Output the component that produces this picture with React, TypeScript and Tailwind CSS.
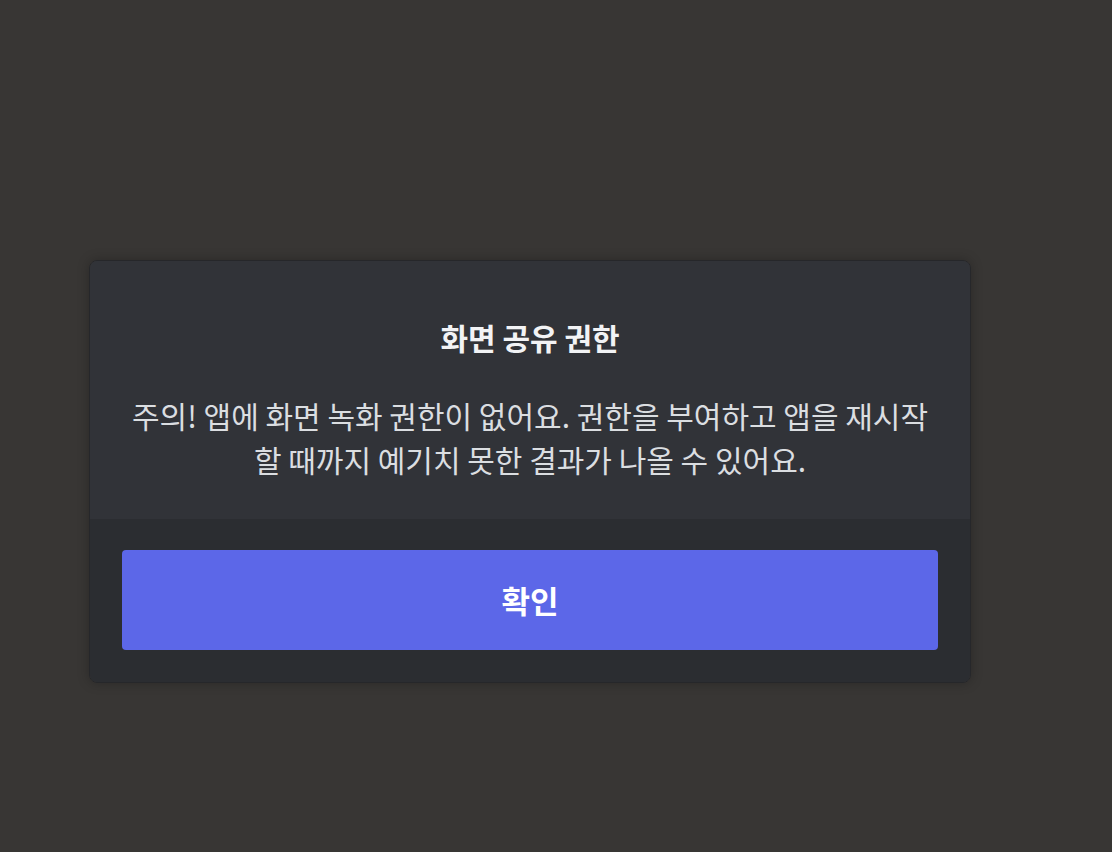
export default function App() {
  return (
    <div
      className="min-h-screen w-full bg-[#383634] pl-[89px] pt-[260px]"
      style={{ fontFamily: '"Noto Sans CJK KR", "Noto Sans", sans-serif' }}
    >
      <div className="w-[882px] overflow-hidden rounded-[8px] border border-[#26272a] shadow-[0_0_12px_rgba(0,0,0,0.25)]">
        <div className="flex flex-col items-center bg-[#313338] px-8 pb-[38px] pt-[56px] text-center">
          <h2 className="text-[30px] font-bold leading-[40px] text-[#f2f3f5]">화면 공유 권한</h2>
          <p className="mt-[36px] text-[30px] leading-[44px] text-[#dbdee1]">
            주의! 앱에 화면 녹화 권한이 없어요. 권한을 부여하고 앱을 재시작
            <br />할 때까지 예기치 못한 결과가 나올 수 있어요.
          </p>
        </div>
        <div className="bg-[#2b2d31] px-[32px] pb-[32px] pt-[31px]">
          <button className="flex h-[100px] w-full items-center justify-center rounded-[4px] bg-[#5c67e8] text-[31px] font-bold text-white">
            확인
          </button>
        </div>
      </div>
    </div>
  );
}
